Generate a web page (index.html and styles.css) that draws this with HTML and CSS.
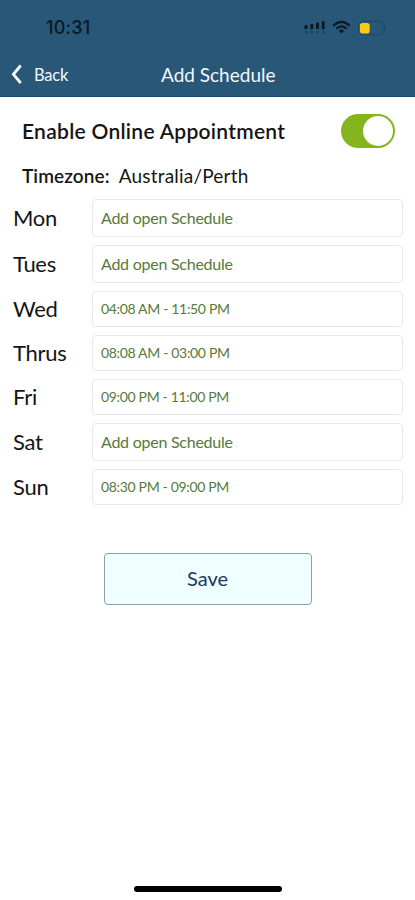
FILE: index.html
```html
<!DOCTYPE html>
<html lang="en">
<head>
<meta charset="utf-8">
<title>Add Schedule</title>
<link rel="stylesheet" href="styles.css">
</head>
<body>
<header class="header">
  <div class="status">
    <span class="clock">10:31</span>
    <svg class="status-icons" width="84" height="18" viewBox="0 0 84 18">
      <g fill="#0b1924"><rect x="1.5" y="7" width="3" height="4.2" rx="1"/><rect x="7.3" y="6" width="3" height="5.2" rx="1"/><rect x="13" y="4.6" width="3" height="6.6" rx="1"/><rect x="18.8" y="3" width="2.8" height="8.2" rx="1"/></g>
      <g fill="#1b3d55"><rect x="2" y="13" width="2.3" height="2.3" rx=".7"/><rect x="7.7" y="13" width="2.3" height="2.3" rx=".7"/><rect x="13.4" y="13" width="2.3" height="2.3" rx=".7"/><rect x="19" y="13" width="2.3" height="2.3" rx=".7"/></g>
      <g fill="none" stroke="#0b1924" stroke-width="2.2"><path d="M30.2 7.7Q38.5-.1 46.8 7.7"/><path d="M33.3 10.8Q38.5 6 43.7 10.8"/></g>
      <path d="M35.8 12.7Q38.5 10.4 41.2 12.7L38.5 15.6Z" fill="#0b1924"/>
      <rect x="55.3" y="3.2" width="26" height="13.6" rx="4.8" fill="none" stroke="#1e4864"/>
      <path d="M82.5 8v4q1.8-2 0-4" fill="#1e4864"/>
      <rect x="56.9" y="4.9" width="9.8" height="10.6" rx="2.8" fill="#f8cb10"/>
    </svg>
  </div>
  <nav class="navbar">
    <a class="back"><svg width="12" height="21" viewBox="0 0 12 21"><path d="M10.7 1.5 3.4 10.3 10.7 19" fill="none" stroke="#fff" stroke-width="2.8"/></svg><span class="back-text">Back</span></a>
    <span class="title">Add Schedule</span>
  </nav>
</header>
<main class="content">
  <div class="enable"><span class="enable-text">Enable Online Appointment</span><span class="switch"><span class="knob"></span></span></div>
  <div class="timezone"><span class="tz-label">Timezone:</span><span class="tz-value">Australia/Perth</span></div>
  <div class="schedule">
    <span class="day">Mon</span><div class="slot">Add open Schedule</div>
    <span class="day">Tues</span><div class="slot">Add open Schedule</div>
    <span class="day">Wed</span><div class="slot time">04:08 AM - 11:50 PM</div>
    <span class="day">Thrus</span><div class="slot time">08:08 AM - 03:00 PM</div>
    <span class="day">Fri</span><div class="slot time">09:00 PM - 11:00 PM</div>
    <span class="day">Sat</span><div class="slot">Add open Schedule</div>
    <span class="day">Sun</span><div class="slot time">08:30 PM - 09:00 PM</div>
  </div>
  <button class="save">Save</button>
</main>
<footer class="home"><span class="home-bar"></span></footer>
</body>
</html>
```
FILE: styles.css
```css
* { box-sizing: border-box; }
body {
  margin: 0;
  height: 900px;
  display: flex;
  flex-direction: column;
  background: #fff;
  color: #151515;
  font-family: Lato, "Liberation Sans", sans-serif;
  white-space: nowrap;
  overflow: hidden;
}
.header { height: 97px; background: #285778; border-bottom: 1px solid #1b4569; }
.status { display: flex; height: 54px; padding: 18px 28px 0 46px; justify-content: space-between; }
.clock { font: 500 18px/20px Inter, sans-serif; color: #0b1924; letter-spacing: 0.2px; }
.navbar { display: grid; grid-template-columns: 151px auto; height: 42px; align-items: center; padding: 0 0 2px 10px; color: #f4f8fb; }
.back { display: flex; align-items: center; gap: 12px; }
.back-text { padding-top: 1px; font-size: 16.5px; letter-spacing: -0.2px; }
.title { font-size: 19px; }
.content { display: flex; flex-direction: column; }
.enable { display: flex; align-items: center; justify-content: space-between; height: 67px; padding: 0 20px 0 22px; }
.enable-text { font-size: 21px; font-weight: 600; letter-spacing: 0.28px; }
.switch { display: flex; justify-content: flex-end; width: 54px; height: 34px; padding: 2px; border-radius: 17px; background: #85b51d; }
.knob { width: 30px; height: 30px; border-radius: 50%; background: #fff; }
.timezone { display: flex; height: 24px; align-items: center; gap: 9px; padding: 0 0 2px 22px; font-size: 19px; }
.tz-label { font-weight: 600; letter-spacing: 0.1px; }
.tz-value { letter-spacing: 0.2px; }
.schedule {
  display: grid;
  grid-template-columns: 79px 311px;
  grid-template-rows: 38px 38px 36px 36px 36px 38px 36px;
  row-gap: 8px;
  padding: 11px 0 0 13px;
}
.day { align-self: center; padding-bottom: 1px; font-size: 22px; letter-spacing: -0.3px; }
.slot { display: flex; align-items: center; padding: 0 0 1px 8px; border: 1px solid #e8e8e8; border-radius: 4px; color: #567a3b; font-size: 16px; letter-spacing: -0.25px; }
.time { font-size: 14px; letter-spacing: -0.33px; }
.save { align-self: center; width: 208px; height: 52px; margin: 48px 0 0; padding-bottom: 3px; border: 1px solid #8e9dac; border-radius: 4px; background: #f0ffff; color: #203763; font: 20px Lato, sans-serif; }
.home { display: flex; justify-content: center; margin-top: auto; height: 14px; }
.home-bar { width: 148px; height: 6px; border-radius: 3px; background: #000; }
```
